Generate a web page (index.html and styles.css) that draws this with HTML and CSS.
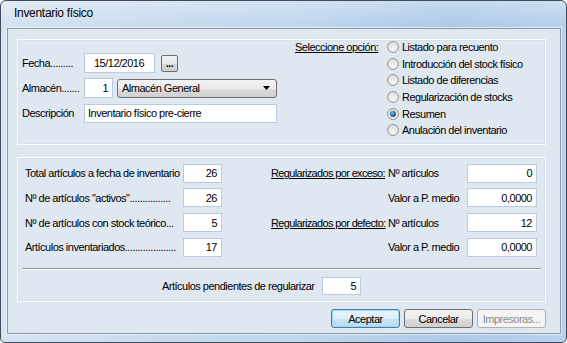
FILE: index.html
```html
<!DOCTYPE html>
<html lang="es">
<head>
<meta charset="utf-8">
<title>Inventario físico</title>
<link rel="stylesheet" href="styles.css">
</head>
<body>
<div class="window">
  <div class="titlebar"><span class="title">Inventario físico</span></div>
  <div class="client">
    <div class="panel panel-top">
      <div class="form-left">
        <div class="row">
          <span class="lbl">Fecha.........</span>
          <span class="input w-date">15/12/2016</span>
          <span class="btn-dots">...</span>
        </div>
        <div class="row">
          <span class="lbl">Almacén.......</span>
          <span class="input w-code num">1</span>
          <span class="combo">Almacén General<svg class="arrow" width="7" height="4" viewBox="0 0 7 4"><path d="M0 0h7L3.5 4z" fill="#000"/></svg></span>
        </div>
        <div class="row">
          <span class="lbl">Descripción</span>
          <span class="input w-desc">Inventario físico pre-cierre</span>
        </div>
      </div>
      <div class="options">
        <span class="u opt-title">Seleccione opción:</span>
        <ul class="radios">
          <li><span class="radio"></span>Listado para recuento</li>
          <li><span class="radio"></span>Introducción del stock físico</li>
          <li><span class="radio"></span>Listado de diferencias</li>
          <li><span class="radio"></span>Regularización de stocks</li>
          <li><span class="radio checked"></span>Resumen</li>
          <li><span class="radio"></span>Anulación del inventario</li>
        </ul>
      </div>
    </div>

    <div class="panel panel-bottom">
      <div class="stats">
        <div class="stats-left">
          <span>Total artículos a fecha de inventario</span><span class="input num">26</span>
          <span>Nº de artículos "activos"................</span><span class="input num">26</span>
          <span>Nº de artículos con stock teórico...</span><span class="input num">5</span>
          <span>Artículos inventariados....................</span><span class="input num">17</span>
        </div>
        <div class="stats-right">
          <span class="u reg">Regularizados por exceso:</span><span>Nº artículos</span><span class="input num">0</span>
          <span></span><span>Valor a P. medio</span><span class="input num">0,0000</span>
          <span class="u reg">Regularizados por defecto:</span><span>Nº artículos</span><span class="input num">12</span>
          <span></span><span>Valor a P. medio</span><span class="input num">0,0000</span>
        </div>
      </div>
      <div class="sep"></div>
      <div class="pending">
        <span class="pending-lbl">Artículos pendientes de regularizar</span>
        <span class="input num w-pend">5</span>
      </div>
    </div>

    <div class="buttons">
      <span class="btn default">Aceptar</span>
      <span class="btn">Cancelar</span>
      <span class="btn disabled">Impresoras...</span>
    </div>
  </div>
</div>
</body>
</html>
```

FILE: styles.css
```css
* { box-sizing: border-box; }
html, body { margin: 0; padding: 0; }
body {
  width: 567px;
  height: 343px;
  overflow: hidden;
  background: #ffffff;
  font-family: "Liberation Sans", Arial, sans-serif;
  font-size: 11px;
  letter-spacing: -0.5px;
  color: #000;
  white-space: nowrap;
}
.window {
  width: 567px;
  height: 343px;
  border: 1px solid #3e4c5b;
  border-radius: 6px 6px 5px 5px;
  display: flex;
  flex-direction: column;
  padding: 0 5px 8px 6px;
  background:
    linear-gradient(180deg, rgba(255,255,255,0.3) 0px, rgba(255,255,255,0) 22px),
    linear-gradient(90deg, #d6e4f2 0%, #cadcef 25%, #bfd6ed 55%, #afcae8 80%, #b9d2ec 100%);
}
.titlebar {
  height: 27px;
  padding: 5px 0 0 7px;
  flex: none;
}
.title {
  font-size: 12px;
  letter-spacing: -0.3px;
  line-height: 14px;
  color: #000;
}
.client {
  flex: 1;
  border: 1px solid #8a98a8;
  box-shadow: 0 0 0 1px rgba(255,255,255,0.55);
  background: #dfe7f0;
  padding: 10px 14px 0 9px;
  display: flex;
  flex-direction: column;
}
.panel {
  border: 1px solid #fbfcfe;
  box-shadow: inset 0 0 0 1px rgba(200,212,225,0.35);
}
.panel-top {
  height: 106px;
  display: grid;
  grid-template-columns: 255px auto;
  column-gap: 18px;
  padding: 0 0 0 4px;
}
.form-left {
  padding-top: 13px;
  display: flex;
  flex-direction: column;
  gap: 5px;
}
.row {
  height: 20px;
  display: flex;
  align-items: center;
}
.lbl { width: 62px; flex: none; }
.input {
  display: inline-flex;
  align-items: center;
  height: 19px;
  background: #fff;
  border: 1px solid #b9cbe1;
  padding: 0 4px;
}
.row .input { height: 20px; }
.num { justify-content: flex-end; }
.w-date { width: 71px; padding-left: 9px; }
.w-code { width: 29px; margin-right: 4px; }
.w-desc { width: 193px; padding-left: 3px; height: 19px !important; }
.btn-dots {
  margin-left: 6px;
  width: 17px;
  height: 17px;
  border: 1px solid #6f6f6f;
  border-radius: 2px;
  background: linear-gradient(#f3f3f3, #e7e7e7 50%, #d6d6d6 51%, #cdcdcd);
  font-weight: bold;
  font-size: 10px;
  letter-spacing: -0.5px;
  display: flex;
  align-items: flex-end;
  justify-content: center;
  line-height: 10px;
  padding-bottom: 2px;
}
.combo {
  width: 160px;
  height: 19px;
  border: 1px solid #6f6f6f;
  border-radius: 3px;
  background: linear-gradient(#f2f2f2, #ebebeb 50%, #dddddd 51%, #cfcfcf);
  display: flex;
  align-items: center;
  justify-content: space-between;
  padding: 0 6px 0 4px;
}
.arrow { display: block; }
.options {
  margin-top: -1px;
  display: flex;
  align-items: flex-start;
}
.opt-title { line-height: 16.6px; width: 92px; flex: none; }
.u { text-decoration: underline; text-underline-offset: 1px; }
.radios {
  list-style: none;
  margin: 0;
  padding: 0;
}
.radios li {
  height: 16.6px;
  display: flex;
  align-items: center;
  gap: 3px;
}
.radio {
  width: 12px;
  height: 12px;
  border-radius: 50%;
  border: 1px solid #9a9a9a;
  background: radial-gradient(circle at 50% 65%, #f7f7f7 0%, #e4e4e4 55%, #cfcfcf 100%);
  position: relative;
  flex: none;
}
.radio.checked::after {
  content: "";
  position: absolute;
  left: 2px;
  top: 2px;
  width: 6px;
  height: 6px;
  border-radius: 50%;
  background: radial-gradient(circle at 40% 35%, #7fb6e6 0%, #2a67a8 50%, #0f3a6e 100%);
}
.panel-bottom {
  margin-top: 12px;
  height: 145px;
  display: flex;
  flex-direction: column;
}
.stats {
  display: flex;
  padding: 3px 0 0 7px;
}
.stats-left {
  display: grid;
  grid-template-columns: 158px 39px;
  grid-auto-rows: 24.67px;
  align-items: center;
}
.stats-right {
  margin-left: 49px;
  display: grid;
  grid-template-columns: 117px 79px 70px;
  grid-auto-rows: 24.67px;
  align-items: center;
}
.reg { letter-spacing: -0.65px; }
.stats .input { height: 19px; }
.sep {
  margin: 8px 4px 0 4px;
  border-top: 1px solid #8e969f;
  border-bottom: 1px solid #ffffff;
}
.pending {
  display: flex;
  align-items: center;
  padding: 7px 0 0 144px;
}
.pending-lbl { width: 160px; }
.w-pend { width: 39px; height: 18px; }
.buttons {
  margin-top: 7px;
  display: flex;
  justify-content: flex-end;
  gap: 4px;
}
.btn {
  width: 69px;
  height: 19px;
  border: 1px solid #707070;
  border-radius: 3px;
  background: linear-gradient(#f2f2f2, #ebebeb 50%, #dddddd 51%, #cfcfcf);
  display: flex;
  align-items: center;
  justify-content: center;
}
.btn.default {
  border-color: #3c7fb1;
  box-shadow: inset 0 0 0 1px #a6d8f5;
  background: linear-gradient(#eaf5fc, #dbeef9 50%, #c6e4f6 51%, #b8dcf2);
}
.btn.disabled {
  border-color: #adb2b5;
  background: #f4f4f4;
  color: #8a8a8a;
}
```
